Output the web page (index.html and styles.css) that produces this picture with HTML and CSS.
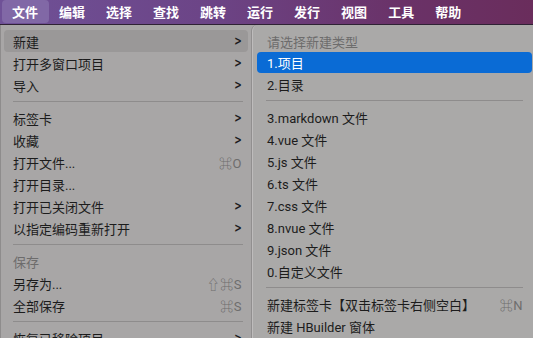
FILE: index.html
```html
<!DOCTYPE html>
<html lang="zh-CN">
<head>
<meta charset="utf-8">
<link rel="stylesheet" href="styles.css">
</head>
<body>
<div class="menubar">
  <span class="mb-item active">文件</span>
  <span class="mb-item">编辑</span>
  <span class="mb-item">选择</span>
  <span class="mb-item">查找</span>
  <span class="mb-item">跳转</span>
  <span class="mb-item">运行</span>
  <span class="mb-item">发行</span>
  <span class="mb-item">视图</span>
  <span class="mb-item">工具</span>
  <span class="mb-item">帮助</span>
</div>
<div class="area">
  <div class="menu main">
    <div class="row hover"><span>新建</span><span class="arrow">&gt;</span></div>
    <div class="row"><span>打开多窗口项目</span><span class="arrow">&gt;</span></div>
    <div class="row"><span>导入</span><span class="arrow">&gt;</span></div>
    <div class="sep"></div>
    <div class="row"><span>标签卡</span><span class="arrow">&gt;</span></div>
    <div class="row"><span>收藏</span><span class="arrow">&gt;</span></div>
    <div class="row"><span>打开文件...</span><span class="key">⌘O</span></div>
    <div class="row"><span>打开目录...</span></div>
    <div class="row"><span>打开已关闭文件</span><span class="arrow">&gt;</span></div>
    <div class="row"><span>以指定编码重新打开</span><span class="arrow">&gt;</span></div>
    <div class="sep"></div>
    <div class="row disabled"><span>保存</span></div>
    <div class="row"><span>另存为...</span><span class="key">⇧⌘S</span></div>
    <div class="row"><span>全部保存</span><span class="key">⌘S</span></div>
    <div class="sep"></div>
    <div class="row"><span>恢复已移除项目</span><span class="arrow">&gt;</span></div>
  </div>
  <div class="menu sub">
    <div class="row disabled"><span>请选择新建类型</span></div>
    <div class="row selected"><span>1.项目</span></div>
    <div class="row"><span>2.目录</span></div>
    <div class="sep"></div>
    <div class="row"><span>3.markdown 文件</span></div>
    <div class="row"><span>4.vue 文件</span></div>
    <div class="row"><span>5.js 文件</span></div>
    <div class="row"><span>6.ts 文件</span></div>
    <div class="row"><span>7.css 文件</span></div>
    <div class="row"><span>8.nvue 文件</span></div>
    <div class="row"><span>9.json 文件</span></div>
    <div class="row"><span>0.自定义文件</span></div>
    <div class="sep"></div>
    <div class="row"><span>新建标签卡【双击标签卡右侧空白】</span><span class="key">⌘N</span></div>
    <div class="row"><span>新建 HBuilder 窗体</span></div>
  </div>
</div>
</body>
</html>
```
FILE: styles.css
```css
* { box-sizing: border-box; }
html, body {
  margin: 0;
  padding: 0;
  width: 533px;
  height: 338px;
  overflow: hidden;
  background: #a7a5a5;
  font-family: Roboto, "Noto Sans CJK SC", sans-serif;
  font-size: 13px;
}
.menubar {
  height: 25px;
  display: flex;
  align-items: stretch;
  padding: 0 0 0 1.5px;
  background: linear-gradient(90deg, #6f5197 0%, #6c4486 40%, #6a3268 75%, #6a2d5c 100%);
  border-bottom: 1px solid #2f2234;
}
.mb-item {
  padding: 0 10.5px;
  display: flex;
  align-items: center;
  color: #ffffff;
  font-weight: 700;
  font-size: 13px;
  border-radius: 4px;
  margin-bottom: 1px;
}
.mb-item.active {
  background: #8168a6;
}
.area {
  display: flex;
  height: 313px;
}
.menu {
  padding-top: 5px;
  display: flex;
  flex-direction: column;
}
.main {
  width: 252px;
  flex: none;
  background: #a8a6a6;
  border-left: 1px solid #8e8c8c;
}
.sub {
  width: 284px;
  flex: none;
  background: #aaa9a8;
  border-left: 1px solid #bebcbc;
  border-top-left-radius: 6px;
  box-shadow: -1px 0 0 #918f8f;
}
.row {
  height: 22px;
  flex: none;
  display: flex;
  align-items: center;
  justify-content: space-between;
  margin: 0 4px 0 3px;
  padding: 0 6px 0 9px;
  border-radius: 4px;
  color: #1c1c1c;
}
.sub .row {
  margin: 0 4px 0 4px;
  padding: 0 9px 0 10px;
}
.row.hover {
  background: #9a9898;
}
.row.selected {
  background: #0a6bd5;
  color: #ffffff;
  height: 21px;
}
.row.disabled {
  color: #6d6c6c;
}
.arrow {
  font-family: "DejaVu Sans", sans-serif;
  font-size: 12px;
  font-weight: 700;
  transform: scaleX(0.75);
  color: #1c1c1c;
  margin-right: -1px;
}
.key {
  color: #6e6d6d;
  font-size: 13px;
  letter-spacing: 0.5px;
}
.sep {
  height: 11px;
  flex: none;
  display: flex;
  align-items: center;
  margin: 0 9px 0 12px;
}
.sep::before {
  content: "";
  display: block;
  height: 1px;
  width: 100%;
  background: #8e8c8c;
}
.sub .sep {
  margin: 0 13px 0 13px;
}
```
